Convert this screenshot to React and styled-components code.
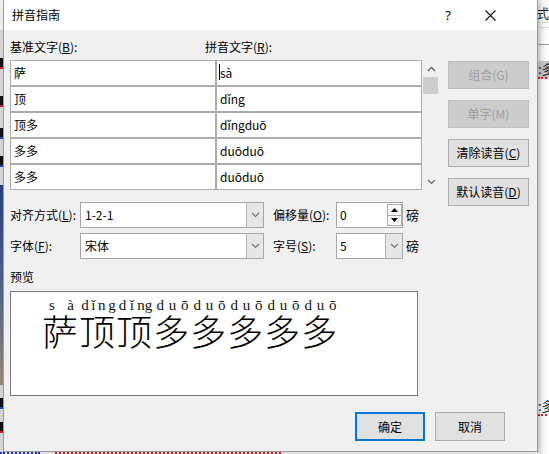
import React from 'react';
import styled, { createGlobalStyle } from 'styled-components';

const GlobalStyle = createGlobalStyle`
  html, body { margin: 0; padding: 0; }
  body {
    width: 549px; height: 454px; overflow: hidden; background: #fff;
    font-family: "Noto Sans CJK SC", "Noto Sans", sans-serif;
  }
`;

const UI_FONT = `"Noto Sans CJK SC", "Noto Sans", sans-serif`;

const Screen = styled.div`
  position: relative;
  width: 549px;
  height: 454px;
  overflow: hidden;
  background: #fdfdfd;
`;

/* ---------- document behind the dialog ---------- */
const LeftEdge = styled.div`
  position: absolute;
  left: 0; top: 0;
  width: 3px; height: 454px;
  background: linear-gradient(#f2f2f2 0 30px, #d9d9d9 30px 100%);
`;
const EdgeBar = styled.div`
  position: absolute;
  left: 0; top: 185px;
  width: 3px; height: 200px;
  background: linear-gradient(#23418a, #5a6b8a 60%, #9b8a78);
`;
const EdgeTick = styled.div`
  position: absolute;
  left: 0;
  top: ${p => p.$y}px;
  width: 3px; height: 9px;
  background: #111;
  border-bottom: 2px solid ${p => p.$c};
`;
const RightDoc = styled.div`
  position: absolute;
  left: 538px; top: 0;
  width: 11px; height: 454px;
  background: #fff;
  box-shadow: inset 4px 0 5px -3px rgba(0,0,0,0.18);
`;
const DocGlyph = styled.span`
  position: absolute;
  left: ${p => p.$x}px;
  top: ${p => p.$y}px;
  font: 13px/16px ${UI_FONT};
  color: #222;
  white-space: nowrap;
  background: ${p => p.$hl ? '#c9c9c9' : 'transparent'};
  border-bottom: ${p => p.$squiggle ? '2px dotted #e02020' : 'none'};
`;
const DocRule = styled.div`
  position: absolute;
  left: 538px;
  top: ${p => p.$y}px;
  width: 11px; height: 1px;
  background: ${p => p.$c};
`;
const DottedLine = styled.div`
  position: absolute;
  top: 452px;
  left: ${p => p.$x}px;
  width: ${p => p.$w}px;
  border-top: 2px dotted ${p => p.$c};
`;

/* ---------- dialog ---------- */
const Dialog = styled.div`
  position: absolute;
  left: 3px; top: 0;
  width: 535px; height: 452px;
  box-sizing: border-box;
  border: 1px solid #9c9c9c;
  border-top: none;
  background: #f0f0f0;
  display: flex;
  flex-direction: column;
  font: 12px/16px ${UI_FONT};
  color: #000;
  box-shadow: 3px 2px 8px rgba(0,0,0,0.18);
`;

const TitleBar = styled.div`
  height: 30px;
  flex: none;
  background: #fff;
  display: flex;
  align-items: center;
  padding: 0 32px 0 8px;
  font-size: 12px;
`;
const Title = styled.span` flex: 1; `;
const TitleBtn = styled.span`
  width: 30px;
  height: 30px;
  display: flex;
  align-items: center;
  justify-content: center;
  margin-left: ${p => p.$gap || 0}px;
  font-family: "Noto Sans", sans-serif;
  font-size: 13px;
`;

const Body = styled.div`
  flex: 1;
  display: flex;
  flex-direction: column;
  padding: 9px 0 0 6px;
`;
const Main = styled.div`
  display: flex;
  align-items: flex-start;
`;
const LeftPane = styled.div`
  width: 430px;
  display: flex;
  flex-direction: column;
`;
const HeaderRow = styled.div`
  display: grid;
  grid-template-columns: 195px auto;
  height: 16px;
  margin-bottom: 5px;
`;
const TableRow = styled.div`
  display: flex;
`;
const TableFrame = styled.div`
  width: 412px;
  box-sizing: border-box;
  display: grid;
  grid-template-columns: 204px 204px;
  grid-auto-rows: 24px;
  gap: 2px;
  padding: 1px;
  background: #acacac;
`;
const Cell = styled.div`
  position: relative;
  background: #fff;
  padding-left: 3px;
  line-height: 24px;
  font-size: 12px;
  white-space: nowrap;
`;
const Caret = styled.span`
  position: absolute;
  left: 2px; top: 3px;
  width: 1px; height: 16px;
  background: #000;
`;
const ScrollBar = styled.div`
  width: 18px;
  height: 130px;
  display: flex;
  flex-direction: column;
`;
const ScrollArrow = styled.div`
  height: 17px;
  display: flex;
  align-items: center;
  justify-content: center;
`;
const Thumb = styled.div`
  height: 17px;
  margin: 0 2px 0 1px;
  background: #cdcdcd;
`;
const ScrollTrack = styled.div` flex: 1; `;

const OptionRow = styled.div`
  display: flex;
  align-items: center;
  height: 26px;
  margin-top: ${p => p.$mt}px;
`;
const Label = styled.span`
  width: ${p => p.$w}px;
  margin-left: ${p => p.$ml || 0}px;
  flex: none;
  white-space: nowrap;
`;
const Field = styled.div`
  width: ${p => p.$w}px;
  height: 26px;
  box-sizing: border-box;
  border: 1px solid #a6a6a6;
  background: #fff;
  display: flex;
`;
const FieldText = styled.span`
  flex: 1;
  padding-left: ${p => p.$pl || 4}px;
  line-height: 24px;
  font-size: 12px;
`;
const DropButton = styled.div`
  width: 16px;
  border-left: 1px solid #b4b4b4;
  background: #e6e6e6;
  display: flex;
  align-items: center;
  justify-content: center;
`;
const Spinner = styled.div`
  width: 15px;
  display: flex;
  flex-direction: column;
  padding: 1px 0;
  box-sizing: border-box;
`;
const SpinHalf = styled.div`
  flex: 1;
  border: 1px solid #adadad;
  margin-top: ${p => p.$mt || 0}px;
  background: #fafafa;
  display: flex;
  align-items: center;
  justify-content: center;
`;
const Unit = styled.span`
  margin-left: 3px;
  font-size: 13px;
`;

const PreviewLabel = styled.div`
  margin-top: 10px;
  height: 16px;
`;
const PreviewBox = styled.div`
  margin-top: 6px;
  width: 408px;
  height: 105px;
  box-sizing: border-box;
  border: 1px solid #787878;
  background: #fff;
  padding: 5px 0 0 32px;
  display: flex;
  align-items: flex-start;
`;
const Ruby = styled.div`
  width: 37px;
  display: flex;
  flex-direction: column;
`;
const RubyTop = styled.div`
  height: 16px;
  display: flex;
  justify-content: space-around;
  font: 15px/16px "Liberation Serif", "DejaVu Serif", serif;
  color: #111;
`;
const RubyBase = styled.div`
  font: 300 36px/36px "Noto Sans CJK SC", sans-serif;
  color: #000;
  margin-top: -1px;
  margin-left: -1px;
`;

const ButtonColumn = styled.div`
  margin-left: 8px;
  padding-top: 22px;
  display: flex;
  flex-direction: column;
  gap: 11px;
`;
const DialogButton = styled.div`
  width: ${p => p.$w}px;
  height: ${p => p.$h}px;
  box-sizing: border-box;
  display: flex;
  align-items: center;
  justify-content: center;
  border: ${p => p.$primary ? '2px solid #0078d7' : p.$disabled ? '1px solid #bfbfbf' : '1px solid #adadad'};
  background: ${p => p.$disabled ? '#cccccc' : '#e1e1e1'};
  color: ${p => p.$disabled ? '#9d9d9d' : '#000'};
  font-size: 12px;
  white-space: nowrap;
`;
const Footer = styled.div`
  margin-top: 16px;
  display: flex;
  justify-content: flex-end;
  gap: 10px;
  padding-right: 32px;
`;

const ChevronUp = () => (
  <svg width="9" height="6" viewBox="0 0 9 6">
    <polyline points="1,5 4.5,1.5 8,5" fill="none" stroke="#606060" strokeWidth="1.3" />
  </svg>
);
const ChevronDown = ({ c = '#606060' }) => (
  <svg width="9" height="6" viewBox="0 0 9 6">
    <polyline points="1,1 4.5,4.5 8,1" fill="none" stroke={c} strokeWidth="1.1" />
  </svg>
);
const Tri = ({ up }) => (
  <svg width="7" height="4" viewBox="0 0 7 4">
    <polygon points={up ? '0,4 3.5,0 7,4' : '0,0 3.5,4 7,0'} fill="#000" />
  </svg>
);
const CloseIcon = () => (
  <svg width="11" height="11" viewBox="0 0 11 11">
    <path d="M0.5 0.5 L10.5 10.5 M10.5 0.5 L0.5 10.5" stroke="#111" strokeWidth="1.1" fill="none" />
  </svg>
);

const rows = [
  ['萨', 'sà'],
  ['顶', 'dǐng'],
  ['顶多', 'dǐngduō'],
  ['多多', 'duōduō'],
  ['多多', 'duōduō'],
];

const preview = [
  ['萨', ['s', 'à']],
  ['顶', ['d', 'ǐ', 'n', 'g']],
  ['顶', ['d', 'ǐ', 'ng']],
  ['多', ['d', 'u', 'ō']],
  ['多', ['d', 'u', 'ō']],
  ['多', ['d', 'u', 'ō']],
  ['多', ['d', 'u', 'ō']],
  ['多', ['d', 'u', 'ō']],
];

export default function App() {
  return (
    <Screen>
      <GlobalStyle />
      <LeftEdge>
        <EdgeTick $y={58} $c="#d02020" />
        <EdgeTick $y={96} $c="#d02020" />
        <EdgeTick $y={128} $c="#2040d0" />
        <EdgeTick $y={156} $c="#2040d0" />
        <EdgeBar />
        <EdgeTick $y={398} $c="#2040d0" />
        <EdgeTick $y={422} $c="#d02020" />
      </LeftEdge>
      <RightDoc />
      <DocGlyph $x={536} $y={5}>式</DocGlyph>
      <DocRule $y={22} $c="#dcdcdc" />
      <DocRule $y={27} $c="#dcdcdc" />
      <DocRule $y={44} $c="#9a9a9a" />
      <DocGlyph $x={538} $y={61} $hl $squiggle>:多</DocGlyph>
      <DocGlyph $x={538} $y={398} $squiggle>:多</DocGlyph>
      <DottedLine $x={0} $w={40} $c="#2030e0" />
      <DottedLine $x={55} $w={226} $c="#e02020" />

      <Dialog>
        <TitleBar>
          <Title>拼音指南</Title>
          <TitleBtn>?</TitleBtn>
          <TitleBtn $gap={12}><CloseIcon /></TitleBtn>
        </TitleBar>
        <Body>
          <Main>
            <LeftPane>
              <HeaderRow>
                <span>基准文字(<u>B</u>):</span>
                <span>拼音文字(<u>R</u>):</span>
              </HeaderRow>
              <TableRow>
                <TableFrame>
                  {rows.map(([base, py], i) => (
                    <React.Fragment key={i}>
                      <Cell>{base}</Cell>
                      <Cell>{i === 0 && <Caret />}{py}</Cell>
                    </React.Fragment>
                  ))}
                </TableFrame>
                <ScrollBar>
                  <ScrollArrow><ChevronUp /></ScrollArrow>
                  <Thumb />
                  <ScrollTrack />
                  <ScrollArrow><ChevronDown /></ScrollArrow>
                </ScrollBar>
              </TableRow>

              <OptionRow $mt={12}>
                <Label $w={70}>对齐方式(<u>L</u>):</Label>
                <Field $w={184}>
                  <FieldText>1-2-1</FieldText>
                  <DropButton><ChevronDown c="#707070" /></DropButton>
                </Field>
                <Label $w={63} $ml={9}>偏移量(<u>O</u>):</Label>
                <Field $w={67}>
                  <FieldText $pl={3}>0</FieldText>
                  <Spinner>
                    <SpinHalf><Tri up /></SpinHalf>
                    <SpinHalf $mt={-1}><Tri /></SpinHalf>
                  </Spinner>
                </Field>
                <Unit>磅</Unit>
              </OptionRow>
              <OptionRow $mt={5}>
                <Label $w={70}>字体(<u>F</u>):</Label>
                <Field $w={184}>
                  <FieldText>宋体</FieldText>
                  <DropButton><ChevronDown c="#707070" /></DropButton>
                </Field>
                <Label $w={63} $ml={9}>字号(<u>S</u>):</Label>
                <Field $w={67}>
                  <FieldText $pl={3}>5</FieldText>
                  <DropButton><ChevronDown c="#707070" /></DropButton>
                </Field>
                <Unit>磅</Unit>
              </OptionRow>

              <PreviewLabel>预览</PreviewLabel>
              <PreviewBox>
                {preview.map(([ch, letters], i) => (
                  <Ruby key={i}>
                    <RubyTop>
                      {letters.map((l, j) => <span key={j}>{l}</span>)}
                    </RubyTop>
                    <RubyBase>{ch}</RubyBase>
                  </Ruby>
                ))}
              </PreviewBox>
            </LeftPane>

            <ButtonColumn>
              <DialogButton $w={81} $h={28} $disabled>组合(G)</DialogButton>
              <DialogButton $w={81} $h={28} $disabled>单字(M)</DialogButton>
              <DialogButton $w={81} $h={28}>清除读音(<u>C</u>)</DialogButton>
              <DialogButton $w={81} $h={28}>默认读音(<u>D</u>)</DialogButton>
            </ButtonColumn>
          </Main>
          <Footer>
            <DialogButton $w={70} $h={29} $primary>确定</DialogButton>
            <DialogButton $w={70} $h={29}>取消</DialogButton>
          </Footer>
        </Body>
      </Dialog>
    </Screen>
  );
}
